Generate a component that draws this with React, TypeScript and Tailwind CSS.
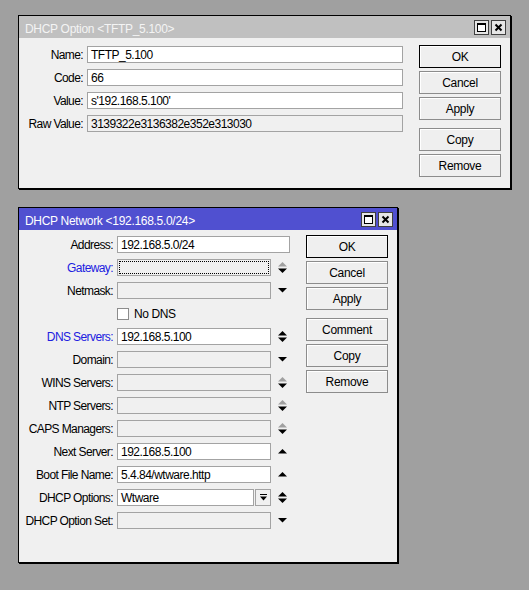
import React from 'react';

const FONT = "font-['Liberation_Sans',Arial,sans-serif]";

type Arrow = 'none' | 'down' | 'up' | 'both' | 'both-dim';

function Arrows({ kind }: { kind: Arrow }) {
  if (kind === 'none') return <span className="w-[9px]" />;
  const black = '#000';
  const gray = '#a0a0a0';
  return (
    <svg width="9" height="17" viewBox="0 0 9 17" className="shrink-0">
      {kind === 'down' && <polygon points="0,6 9,6 4.5,10.5" fill={black} />}
      {kind === 'up' && <polygon points="0,10.5 9,10.5 4.5,6" fill={black} />}
      {(kind === 'both' || kind === 'both-dim') && (
        <>
          <polygon points="0,7.5 9,7.5 4.5,3" fill={kind === 'both' ? black : gray} />
          <polygon points="0,9.5 9,9.5 4.5,14" fill={black} />
        </>
      )}
    </svg>
  );
}

function TitleButtons() {
  return (
    <div className="flex gap-[2px]">
      <div className="flex h-[15px] w-[15px] items-center justify-center border border-[#404040] bg-[#e6e6e6]">
        <div className="h-[9px] w-[9px] border border-black border-t-2 bg-white" />
      </div>
      <div className="flex h-[15px] w-[15px] items-center justify-center border border-[#404040] bg-[#e6e6e6]">
        <svg width="9" height="9" viewBox="0 0 9 9">
          <path d="M1.5 1.5 L7.5 7.5 M7.5 1.5 L1.5 7.5" stroke="#000" strokeWidth="2" />
        </svg>
      </div>
    </div>
  );
}

function Btn({ children, def, className = '' }: { children: React.ReactNode; def?: boolean; className?: string }) {
  return (
    <div
      className={`flex h-[23px] w-[82px] items-center justify-center bg-[#efefef] pt-[1px] text-[12px] tracking-[-0.3px] text-black shadow-[inset_1px_1px_0_#ffffff] ${
        def ? 'border border-black' : 'border border-[#8c8c8c]'
      } ${className}`}
    >
      {children}
    </div>
  );
}

function Field({
  value = '',
  width,
  disabled,
  focused,
}: {
  value?: string;
  width: number;
  disabled?: boolean;
  focused?: boolean;
}) {
  return (
    <div
      className={`flex h-[17px] items-center border border-[#a3a3a3] pl-[3px] text-[12px] leading-none tracking-[-0.5px] text-black ${
        disabled ? 'bg-[#f0f0f0]' : 'bg-white'
      } ${focused ? 'outline-1 outline-dotted outline-black outline-offset-[-3px]' : ''}`}
      style={{ width }}
    >
      {value}
    </div>
  );
}

function OptionWindow() {
  const rows = [
    { label: 'Name:', value: 'TFTP_5.100' },
    { label: 'Code:', value: '66' },
    { label: 'Value:', value: "s'192.168.5.100'" },
    { label: 'Raw Value:', value: '3139322e3136382e352e313030', disabled: true },
  ];
  return (
    <div className="ml-[18px] mt-[15px] flex h-[174px] w-[493px] flex-col border border-black bg-[#f0f0f0] shadow-[1px_1px_0_#000]">
      <div className="flex h-[22px] items-center justify-between bg-[#c0c0c0] pl-[6px] pr-[4px]">
        <span className="pt-[3px] text-[12px] tracking-[-0.3px] text-[#f4f4f4]">DHCP Option &lt;TFTP_5.100&gt;</span>
        <TitleButtons />
      </div>
      <div className="flex">
        <div className="flex flex-col gap-[6px] pt-[8px]">
          {rows.map((r) => (
            <div key={r.label} className="flex h-[17px] items-center">
              <span className="w-[64px] text-right text-[12px] tracking-[-0.6px] text-black">{r.label}</span>
              <span className="ml-[4px]">
                <Field value={r.value} width={316} disabled={r.disabled} />
              </span>
            </div>
          ))}
        </div>
        <div className="ml-[16px] flex flex-col gap-[3px] pt-[7px]">
          <Btn def>OK</Btn>
          <Btn>Cancel</Btn>
          <Btn>Apply</Btn>
          <Btn className="mt-[5px]">Copy</Btn>
          <Btn>Remove</Btn>
        </div>
      </div>
    </div>
  );
}

type NetRow = {
  label: string;
  value?: string;
  blue?: boolean;
  disabled?: boolean;
  focused?: boolean;
  arrow: Arrow;
  wide?: boolean;
  combo?: boolean;
  check?: boolean;
};

const NET_ROWS: NetRow[] = [
  { label: 'Address:', value: '192.168.5.0/24', arrow: 'none', wide: true },
  { label: 'Gateway:', blue: true, disabled: true, focused: true, arrow: 'both-dim' },
  { label: 'Netmask:', disabled: true, arrow: 'down' },
  { label: '', arrow: 'none', check: true },
  { label: 'DNS Servers:', blue: true, value: '192.168.5.100', arrow: 'both' },
  { label: 'Domain:', disabled: true, arrow: 'down' },
  { label: 'WINS Servers:', disabled: true, arrow: 'both-dim' },
  { label: 'NTP Servers:', disabled: true, arrow: 'both-dim' },
  { label: 'CAPS Managers:', disabled: true, arrow: 'both-dim' },
  { label: 'Next Server:', value: '192.168.5.100', arrow: 'up' },
  { label: 'Boot File Name:', value: '5.4.84/wtware.http', arrow: 'up' },
  { label: 'DHCP Options:', value: 'Wtware', arrow: 'both', combo: true },
  { label: 'DHCP Option Set:', disabled: true, arrow: 'down' },
];

function NetworkWindow() {
  return (
    <div className="ml-[18px] mt-[18px] flex h-[356px] w-[380px] flex-col border border-black bg-[#f0f0f0] shadow-[1px_1px_0_#000]">
      <div className="flex h-[22px] items-center justify-between bg-[#5050d0] pl-[6px] pr-[4px]">
        <span className="pt-[3px] text-[12px] tracking-[-0.3px] text-white">DHCP Network &lt;192.168.5.0/24&gt;</span>
        <TitleButtons />
      </div>
      <div className="flex">
        <div className="flex flex-col gap-[6px] pt-[6px]">
          {NET_ROWS.map((r, i) => (
            <div key={i} className="flex h-[17px] items-center">
              <span
                className={`w-[94px] text-right text-[12px] tracking-[-0.6px] ${r.blue ? 'text-[#2020e0]' : 'text-black'}`}
              >
                {r.label}
              </span>
              <span className="ml-[4px] flex items-center">
                {r.check ? (
                  <span className="flex items-center gap-[5px] text-[12px] tracking-[-0.4px] text-black">
                    <span className="h-[12px] w-[12px] border border-[#8c8c8c] bg-white" />
                    No DNS
                  </span>
                ) : r.combo ? (
                  <>
                    <Field value={r.value} width={137} />
                    <div className="ml-[1px] flex h-[17px] w-[16px] items-center justify-center border border-[#a3a3a3] bg-[#f0f0f0]">
                      <svg width="9" height="9" viewBox="0 0 9 9">
                        <rect x="1" y="1" width="7" height="1" fill="#000" />
                        <polygon points="1,3.5 8,3.5 4.5,7.5" fill="#000" />
                      </svg>
                    </div>
                  </>
                ) : (
                  <Field value={r.value} width={r.wide ? 173 : 154} disabled={r.disabled} focused={r.focused} />
                )}
              </span>
              {!r.wide && !r.check && (
                <span className="ml-[7px] flex">
                  <Arrows kind={r.arrow} />
                </span>
              )}
            </div>
          ))}
        </div>
        <div className="ml-[16px] flex flex-col gap-[3px] pt-[5px]">
          <Btn def>OK</Btn>
          <Btn>Cancel</Btn>
          <Btn>Apply</Btn>
          <Btn className="mt-[5px]">Comment</Btn>
          <Btn>Copy</Btn>
          <Btn>Remove</Btn>
        </div>
      </div>
    </div>
  );
}

export default function App() {
  return (
    <div className={`flex h-[590px] w-[529px] flex-col bg-[#a0a0a0] ${FONT}`}>
      <OptionWindow />
      <NetworkWindow />
    </div>
  );
}
